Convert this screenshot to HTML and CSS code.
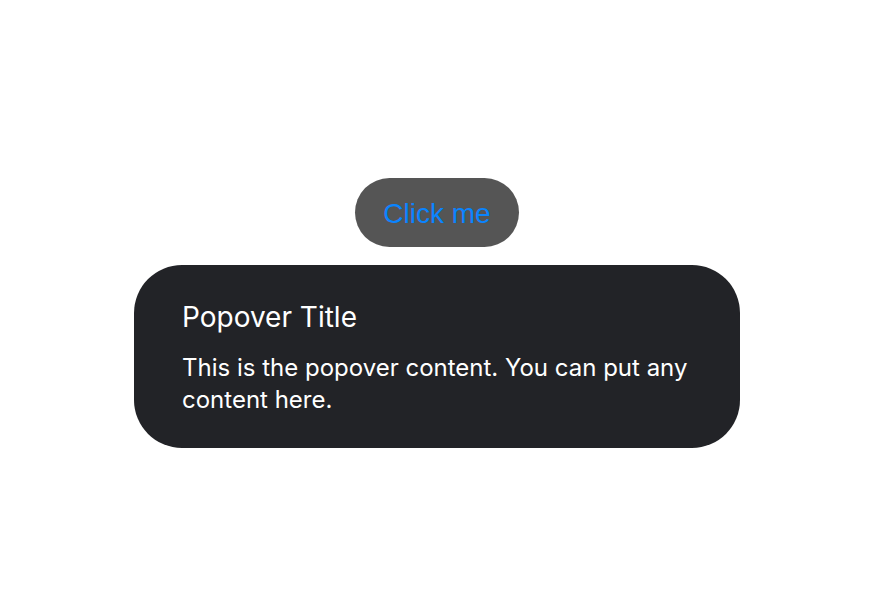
FILE: index.html
```html
<!DOCTYPE html>
<html lang="en">
<head>
    <meta charset="UTF-8">
    <meta name="viewport" content="width=device-width, initial-scale=1.0">
    <title>Popover</title>
    <link rel="stylesheet" href="styles.css">
</head>
<body>
    <div class="popover-wrap">
        <button class="trigger">Click me</button>
        <div class="popover">
            <h3 class="popover-title">Popover Title</h3>
            <p class="popover-body">This is the popover content. You can put any content here.</p>
        </div>
    </div>
</body>
</html>
```

FILE: styles.css
```css
* {
    margin: 0;
    padding: 0;
    box-sizing: border-box;
}

body {
    background: #fff;
    min-height: 100vh;
    font-family: Inter, "Noto Sans", sans-serif;
}

.popover-wrap {
    display: flex;
    flex-direction: column;
    align-items: center;
    padding-top: 178px;
    gap: 18px;
}

.trigger {
    border: none;
    background: #555555;
    color: #0a84ff;
    font-family: "Liberation Sans", Arial, sans-serif;
    font-size: 28px;
    width: 164px;
    height: 69px;
    border-radius: 35px;
    padding-top: 2px;
    cursor: pointer;
}

.popover {
    background: #222327;
    color: #fff;
    width: 606px;
    min-height: 183px;
    border-radius: 48px;
    padding: 35px 48px 32px;
}

.popover-title {
    font-size: 28px;
    font-weight: 400;
    line-height: 34px;
    margin-bottom: 18px;
}

.popover-body {
    font-size: 24px;
    line-height: 32px;
}
```
